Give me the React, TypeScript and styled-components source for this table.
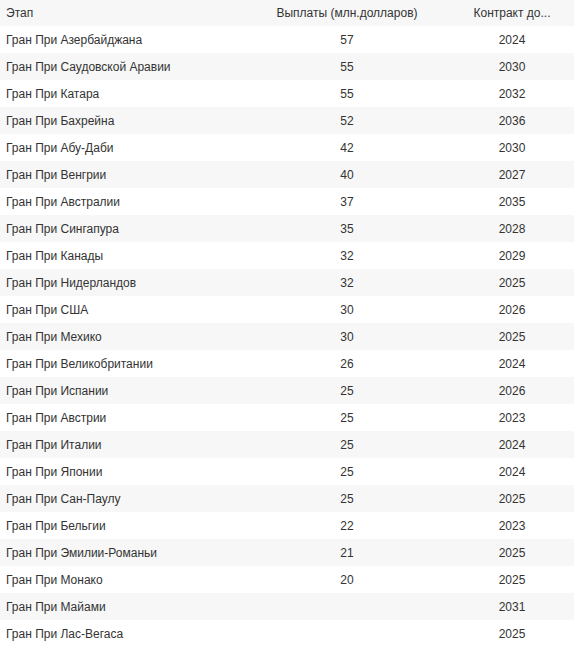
import React from "react";
import styled, { createGlobalStyle } from "styled-components";

const Global = createGlobalStyle`
  html, body { margin: 0; padding: 0; background: #fff; }
  body { font-family: "Liberation Sans", Arial, sans-serif; }
`;

const Table = styled.table`
  width: 574px;
  border-collapse: collapse;
  table-layout: fixed;
  font-family: "Liberation Sans", Arial, sans-serif;
  font-size: 12px;
  color: #333;
`;

const Row = styled.tr<{ $shade: boolean; $head?: boolean }>`
  height: ${(p) => (p.$head ? "26px" : "27px")};
  background: ${(p) => (p.$shade ? "#f7f7f7" : "#ffffff")};
`;

const HeadCell = styled.th<{ $align: "left" | "center" }>`
  font-weight: normal;
  text-align: ${(p) => p.$align};
  padding: 0 0 0 ${(p) => (p.$align === "left" ? "6px" : "0")};
  white-space: nowrap;
  overflow: hidden;
`;

const Cell = styled.td<{ $align: "left" | "center" }>`
  text-align: ${(p) => p.$align};
  padding: 0 0 0 ${(p) => (p.$align === "left" ? "6px" : "0")};
  white-space: nowrap;
`;

const data: [string, string, string][] = [
  ["Азербайджана", "57", "2024"],
  ["Саудовской Аравии", "55", "2030"],
  ["Катара", "55", "2032"],
  ["Бахрейна", "52", "2036"],
  ["Абу-Даби", "42", "2030"],
  ["Венгрии", "40", "2027"],
  ["Австралии", "37", "2035"],
  ["Сингапура", "35", "2028"],
  ["Канады", "32", "2029"],
  ["Нидерландов", "32", "2025"],
  ["США", "30", "2026"],
  ["Мехико", "30", "2025"],
  ["Великобритании", "26", "2024"],
  ["Испании", "25", "2026"],
  ["Австрии", "25", "2023"],
  ["Италии", "25", "2024"],
  ["Японии", "25", "2024"],
  ["Сан-Паулу", "25", "2025"],
  ["Бельгии", "22", "2023"],
  ["Эмилии-Романьи", "21", "2025"],
  ["Монако", "20", "2025"],
  ["Майами", "", "2031"],
  ["Лас-Вегаса", "", "2025"],
];

export default function App() {
  return (
    <>
      <Global />
      <Table>
        <colgroup>
          <col style={{ width: 244 }} />
          <col style={{ width: 206 }} />
          <col style={{ width: 124 }} />
        </colgroup>
        <thead>
          <Row $shade $head>
            <HeadCell $align="left">Этап</HeadCell>
            <HeadCell $align="center">Выплаты (млн.долларов)</HeadCell>
            <HeadCell $align="center">Контракт до...</HeadCell>
          </Row>
        </thead>
        <tbody>
          {data.map(([name, pay, year], i) => (
            <Row key={name} $shade={i % 2 === 1}>
              <Cell $align="left">Гран При {name}</Cell>
              <Cell $align="center">{pay}</Cell>
              <Cell $align="center">{year}</Cell>
            </Row>
          ))}
        </tbody>
      </Table>
    </>
  );
}
